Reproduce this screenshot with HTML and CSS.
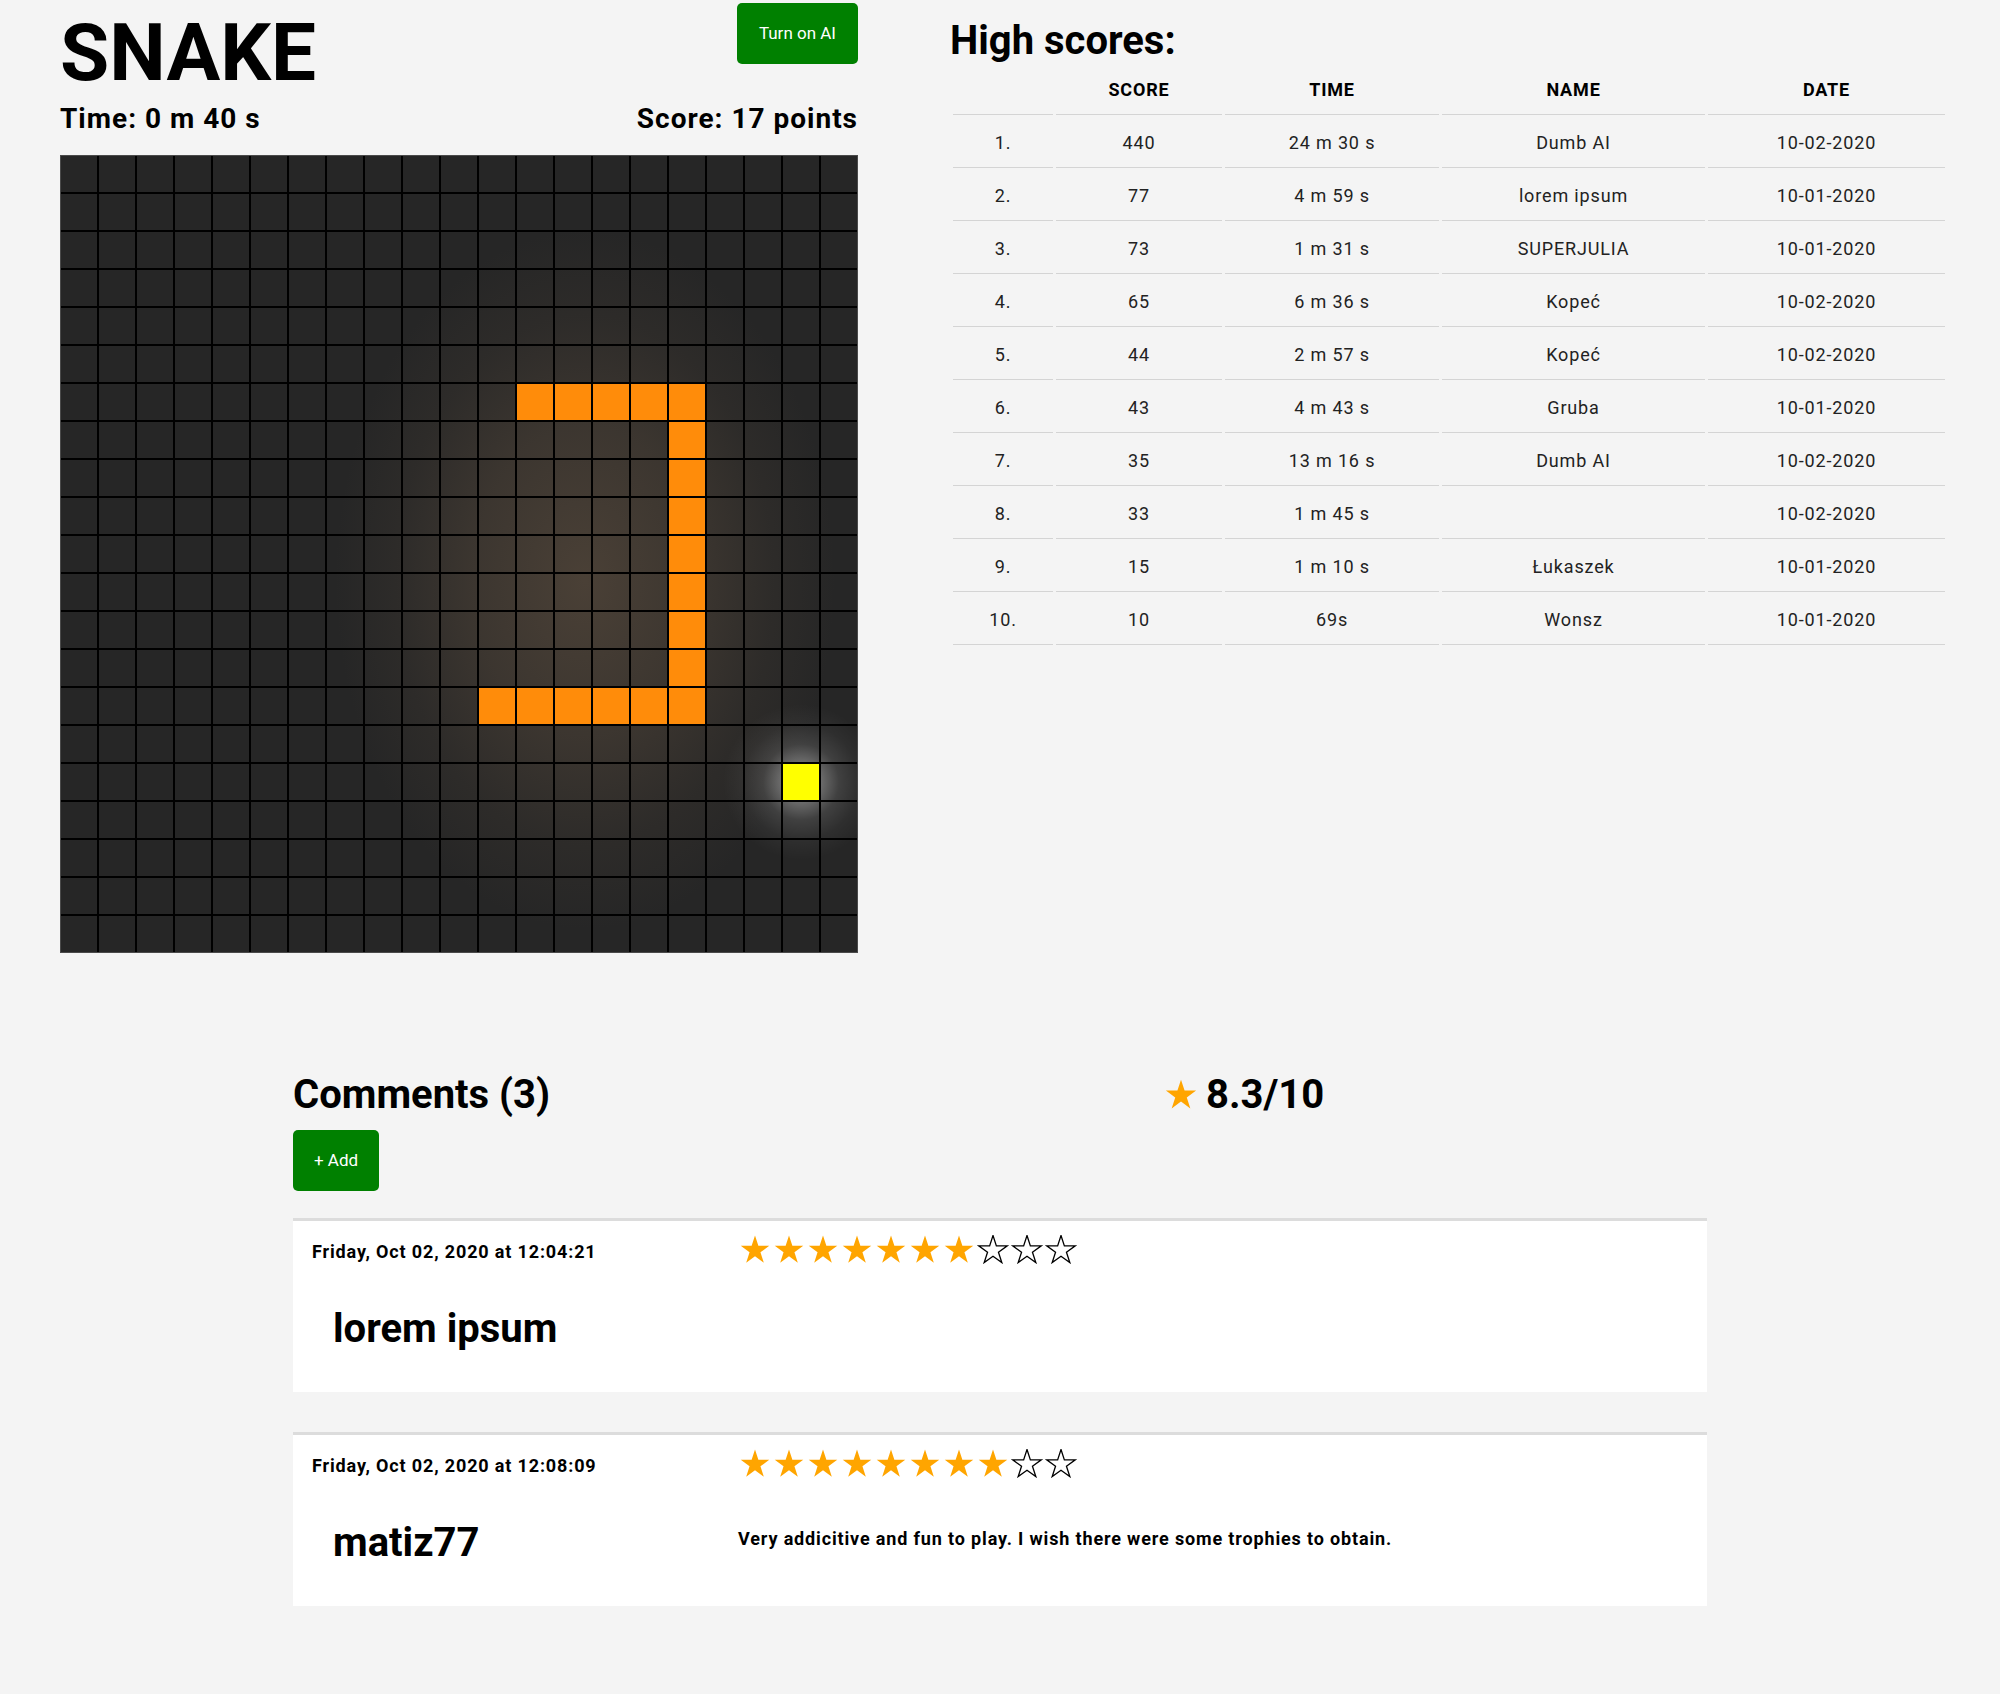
FILE: index.html
```html
<!DOCTYPE html>
<html lang="en">
<head>
<meta charset="utf-8">
<title>Snake</title>
<link rel="stylesheet" href="styles.css">
</head>
<body>
<svg class="defs" width="0" height="0" aria-hidden="true">
  <symbol id="star" viewBox="-17 -15.5 34 30">
    <polygon points="0,-15 3.368,-4.636 14.266,-4.635 5.449,1.771 8.817,12.135 0,5.73 -8.817,12.135 -5.449,1.771 -14.266,-4.635 -3.368,-4.636"/>
  </symbol>
</svg>
<main class="page">
  <section class="top">
    <div class="game">
      <div class="game-head">
        <h1 class="title">SNAKE</h1>
        <button class="btn">Turn on AI</button>
      </div>
      <div class="stats">
        <span>Time: 0 m 40 s</span>
        <span>Score: 17 points</span>
      </div>
      <div class="board">
        <i></i><i></i><i></i><i></i><i></i> <i></i><i></i><i></i><i></i><i></i> <i></i><i></i><i></i><i></i><i></i> <i></i><i></i><i></i><i></i><i></i> <i></i>
        <i></i><i></i><i></i><i></i><i></i> <i></i><i></i><i></i><i></i><i></i> <i></i><i></i><i></i><i></i><i></i> <i></i><i></i><i></i><i></i><i></i> <i></i>
        <i></i><i></i><i></i><i></i><i></i> <i></i><i></i><i></i><i></i><i></i> <i></i><i></i><i></i><i></i><i></i> <i></i><i></i><i></i><i></i><i></i> <i></i>
        <i></i><i></i><i></i><i></i><i></i> <i></i><i></i><i></i><i></i><i></i> <i></i><i></i><i></i><i></i><i></i> <i></i><i></i><i></i><i></i><i></i> <i></i>
        <i></i><i></i><i></i><i></i><i></i> <i></i><i></i><i></i><i></i><i></i> <i></i><i></i><i></i><i></i><i></i> <i></i><i></i><i></i><i></i><i></i> <i></i>
        <i></i><i></i><i></i><i></i><i></i> <i></i><i></i><i></i><i></i><i></i> <i></i><i></i><i></i><i></i><i></i> <i></i><i></i><i></i><i></i><i></i> <i></i>
        <i></i><i></i><i></i><i></i><i></i> <i></i><i></i><i></i><i></i><i></i> <i></i><i></i><i class="s"></i><i class="s"></i><i class="s"></i> <i class="s"></i><i class="s"></i><i></i><i></i><i></i> <i></i>
        <i></i><i></i><i></i><i></i><i></i> <i></i><i></i><i></i><i></i><i></i> <i></i><i></i><i></i><i></i><i></i> <i></i><i class="s"></i><i></i><i></i><i></i> <i></i>
        <i></i><i></i><i></i><i></i><i></i> <i></i><i></i><i></i><i></i><i></i> <i></i><i></i><i></i><i></i><i></i> <i></i><i class="s"></i><i></i><i></i><i></i> <i></i>
        <i></i><i></i><i></i><i></i><i></i> <i></i><i></i><i></i><i></i><i></i> <i></i><i></i><i></i><i></i><i></i> <i></i><i class="s"></i><i></i><i></i><i></i> <i></i>
        <i></i><i></i><i></i><i></i><i></i> <i></i><i></i><i></i><i></i><i></i> <i></i><i></i><i></i><i></i><i></i> <i></i><i class="s"></i><i></i><i></i><i></i> <i></i>
        <i></i><i></i><i></i><i></i><i></i> <i></i><i></i><i></i><i></i><i></i> <i></i><i></i><i></i><i></i><i></i> <i></i><i class="s"></i><i></i><i></i><i></i> <i></i>
        <i></i><i></i><i></i><i></i><i></i> <i></i><i></i><i></i><i></i><i></i> <i></i><i></i><i></i><i></i><i></i> <i></i><i class="s"></i><i></i><i></i><i></i> <i></i>
        <i></i><i></i><i></i><i></i><i></i> <i></i><i></i><i></i><i></i><i></i> <i></i><i></i><i></i><i></i><i></i> <i></i><i class="s"></i><i></i><i></i><i></i> <i></i>
        <i></i><i></i><i></i><i></i><i></i> <i></i><i></i><i></i><i></i><i></i> <i></i><i class="s"></i><i class="s"></i><i class="s"></i><i class="s"></i> <i class="s"></i><i class="s"></i><i></i><i></i><i></i> <i></i>
        <i></i><i></i><i></i><i></i><i></i> <i></i><i></i><i></i><i></i><i></i> <i></i><i></i><i></i><i></i><i></i> <i></i><i></i><i></i><i></i><i></i> <i></i>
        <i></i><i></i><i></i><i></i><i></i> <i></i><i></i><i></i><i></i><i></i> <i></i><i></i><i></i><i></i><i></i> <i></i><i></i><i></i><i></i><i class="f"></i> <i></i>
        <i></i><i></i><i></i><i></i><i></i> <i></i><i></i><i></i><i></i><i></i> <i></i><i></i><i></i><i></i><i></i> <i></i><i></i><i></i><i></i><i></i> <i></i>
        <i></i><i></i><i></i><i></i><i></i> <i></i><i></i><i></i><i></i><i></i> <i></i><i></i><i></i><i></i><i></i> <i></i><i></i><i></i><i></i><i></i> <i></i>
        <i></i><i></i><i></i><i></i><i></i> <i></i><i></i><i></i><i></i><i></i> <i></i><i></i><i></i><i></i><i></i> <i></i><i></i><i></i><i></i><i></i> <i></i>
        <i></i><i></i><i></i><i></i><i></i> <i></i><i></i><i></i><i></i><i></i> <i></i><i></i><i></i><i></i><i></i> <i></i><i></i><i></i><i></i><i></i> <i></i>
      </div>
    </div>

    <div class="scores">
      <h2 class="h2">High scores:</h2>
      <table class="table">
        <colgroup>
          <col class="c1"><col class="c2"><col class="c3"><col class="c4"><col class="c5">
        </colgroup>
        <thead>
          <tr><th></th><th>SCORE</th><th>TIME</th><th>NAME</th><th>DATE</th></tr>
        </thead>
        <tbody>
          <tr><td>1.</td><td>440</td><td>24 m 30 s</td><td>Dumb AI</td><td>10-02-2020</td></tr>
          <tr><td>2.</td><td>77</td><td>4 m 59 s</td><td>lorem ipsum</td><td>10-01-2020</td></tr>
          <tr><td>3.</td><td>73</td><td>1 m 31 s</td><td>SUPERJULIA</td><td>10-01-2020</td></tr>
          <tr><td>4.</td><td>65</td><td>6 m 36 s</td><td>Kopeć</td><td>10-02-2020</td></tr>
          <tr><td>5.</td><td>44</td><td>2 m 57 s</td><td>Kopeć</td><td>10-02-2020</td></tr>
          <tr><td>6.</td><td>43</td><td>4 m 43 s</td><td>Gruba</td><td>10-01-2020</td></tr>
          <tr><td>7.</td><td>35</td><td>13 m 16 s</td><td>Dumb AI</td><td>10-02-2020</td></tr>
          <tr><td>8.</td><td>33</td><td>1 m 45 s</td><td></td><td>10-02-2020</td></tr>
          <tr><td>9.</td><td>15</td><td>1 m 10 s</td><td>Łukaszek</td><td>10-01-2020</td></tr>
          <tr><td>10.</td><td>10</td><td>69s</td><td>Wonsz</td><td>10-01-2020</td></tr>
        </tbody>
      </table>
    </div>
  </section>

  <section class="comments">
    <div class="comments-head">
      <h2 class="h2 comments-title">Comments (3)</h2>
      <div class="rating">
        <svg class="rating-star" width="36" height="32"><use href="#star"/></svg>
        <span>8.3/10</span>
      </div>
    </div>
    <button class="btn add">+ Add</button>

    <div class="list">
      <article class="card">
        <div class="date">Friday, Oct 02, 2020 at 12:04:21</div>
        <div class="stars">
          <svg class="st on" width="34" height="30"><use href="#star"/></svg>
          <svg class="st on" width="34" height="30"><use href="#star"/></svg>
          <svg class="st on" width="34" height="30"><use href="#star"/></svg>
          <svg class="st on" width="34" height="30"><use href="#star"/></svg>
          <svg class="st on" width="34" height="30"><use href="#star"/></svg>
          <svg class="st on" width="34" height="30"><use href="#star"/></svg>
          <svg class="st on" width="34" height="30"><use href="#star"/></svg>
          <svg class="st off" width="34" height="30"><use href="#star"/></svg>
          <svg class="st off" width="34" height="30"><use href="#star"/></svg>
          <svg class="st off" width="34" height="30"><use href="#star"/></svg>
        </div>
        <h3 class="name">lorem ipsum</h3>
        <p class="text"></p>
      </article>

      <article class="card">
        <div class="date">Friday, Oct 02, 2020 at 12:08:09</div>
        <div class="stars">
          <svg class="st on" width="34" height="30"><use href="#star"/></svg>
          <svg class="st on" width="34" height="30"><use href="#star"/></svg>
          <svg class="st on" width="34" height="30"><use href="#star"/></svg>
          <svg class="st on" width="34" height="30"><use href="#star"/></svg>
          <svg class="st on" width="34" height="30"><use href="#star"/></svg>
          <svg class="st on" width="34" height="30"><use href="#star"/></svg>
          <svg class="st on" width="34" height="30"><use href="#star"/></svg>
          <svg class="st on" width="34" height="30"><use href="#star"/></svg>
          <svg class="st off" width="34" height="30"><use href="#star"/></svg>
          <svg class="st off" width="34" height="30"><use href="#star"/></svg>
        </div>
        <h3 class="name">matiz77</h3>
        <p class="text">Very addicitive and fun to play. I wish there were some trophies to obtain.</p>
      </article>
    </div>
  </section>
</main>
</body>
</html>
```
FILE: styles.css
```css
* { box-sizing: border-box; }

html, body {
  margin: 0;
  background: #f4f4f4;
}

body {
  font-family: Roboto, "Liberation Sans", Arial, sans-serif;
  color: #000;
  min-height: 1694px;
}

.defs {
  display: block;
  width: 0;
  height: 0;
  overflow: hidden;
}

/* ---------- top section ---------- */
.top {
  display: flex;
  align-items: flex-start;
  gap: 92px;
  padding: 3px 0 0 60px;
}

.game {
  width: 798px;
  flex: 0 0 798px;
}

.game-head {
  display: flex;
  justify-content: space-between;
  align-items: flex-start;
}

.title {
  margin: 3px 0 0;
  font-size: 80px;
  font-weight: 700;
  line-height: normal;
}

.btn {
  display: inline-block;
  background: #008000;
  color: #fff;
  border: 0;
  border-radius: 5px;
  font-family: Roboto, "Liberation Sans", Arial, sans-serif;
  font-size: 17px;
  font-weight: 400;
  line-height: 21px;
  padding: 20px 22px;
  cursor: pointer;
}

.stats {
  display: flex;
  justify-content: space-between;
  margin-top: 2px;
  font-size: 28px;
  font-weight: 700;
  line-height: normal;
  letter-spacing: 1px;
}

.board {
  margin-top: 20px;
  width: 798px;
  height: 798px;
  display: grid;
  grid-template-columns: repeat(21, 38px);
  grid-auto-rows: 38px;
  background:
    radial-gradient(circle 78px at 741px 627px,
      rgba(255,255,255,0.55) 0,
      rgba(255,255,255,0.34) 18px,
      rgba(255,255,255,0.12) 38px,
      rgba(255,255,255,0.04) 58px,
      rgba(255,255,255,0) 78px),
    radial-gradient(ellipse 250px 350px at 525px 425px,
      rgba(110,90,70,0.5) 0%,
      rgba(110,90,70,0.3) 45%,
      rgba(110,90,70,0.1) 75%,
      rgba(110,90,70,0) 100%),
    #262626;
  outline: 1px solid #4a4a4a;
  outline-offset: -1px;
}

.board i {
  display: block;
  border: 1px solid #000;
}

.board i.s { background: #ff8c0a; }
.board i.f { background: #ffff00; }

/* ---------- high scores ---------- */
.scores {
  flex: 0 0 998px;
}

.h2 {
  font-size: 40px;
  font-weight: 700;
  line-height: normal;
  margin: 0;
}

.scores .h2 {
  margin-top: 14px;
}

.table {
  margin-top: -2px;
  width: 998px;
  table-layout: fixed;
  border-collapse: separate;
  border-spacing: 3px 2px;
  color: #222;
}

.c1 { width: 100px; }
.c2 { width: 166px; }
.c3 { width: 214px; }
.c4 { width: 263px; }
.c5 { width: 237px; }

.table th,
.table td {
  padding: 15px 0 14px;
  border-bottom: 1px solid #d4d4d4;
  text-align: center;
  font-size: 18px;
  line-height: normal;
  letter-spacing: 0.85px;
}

.table th {
  color: #000;
  font-weight: 700;
}

/* ---------- comments ---------- */
.comments {
  width: 1414px;
  margin: 118px auto 0;
  padding-bottom: 80px;
}

.comments-head {
  display: flex;
  align-items: center;
}

.comments-title {
  flex: 0 0 870px;
}

.rating {
  display: flex;
  align-items: center;
  gap: 7px;
  font-size: 40px;
  font-weight: 700;
  line-height: normal;
}

.rating-star { fill: #ffa500; display: block; }

.add {
  margin-top: 12px;
  padding: 20px 21px;
}

.list {
  margin-top: 27px;
  display: flex;
  flex-direction: column;
  gap: 40px;
}

.card {
  background: #fff;
  border-top: 3px solid #dcdcdc;
  padding: 14px 19px 40px;
  display: grid;
  grid-template-columns: 426px 1fr;
  row-gap: 40px;
  align-items: center;
}

.date {
  align-self: start;
  margin-top: 6px;
  font-size: 18px;
  font-weight: 700;
  line-height: normal;
  letter-spacing: 0.85px;
}

.stars {
  align-self: start;
  display: flex;
}

.st { display: block; }
.st.on { fill: #ffa500; }
.st.off { fill: #fff; stroke: #000; stroke-width: 1.3; stroke-linejoin: miter; }

.name {
  margin: 0 0 0 21px;
  font-size: 40px;
  font-weight: 700;
  line-height: normal;
}

.text {
  align-self: start;
  margin: 9px 0 0;
  font-size: 18px;
  font-weight: 700;
  line-height: normal;
  letter-spacing: 0.85px;
}
```
